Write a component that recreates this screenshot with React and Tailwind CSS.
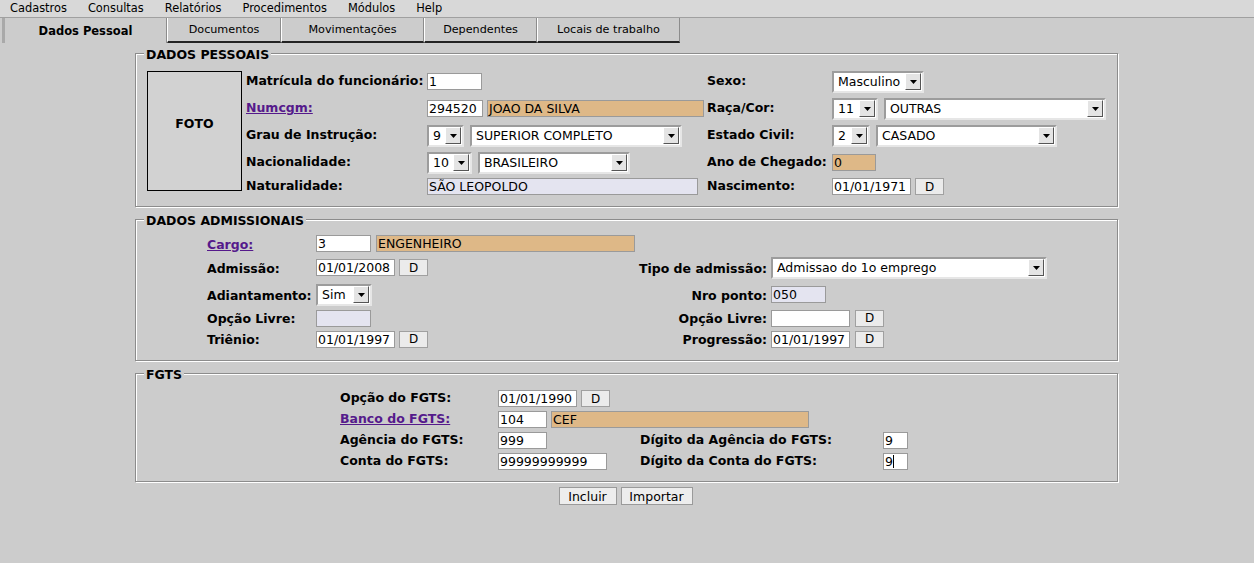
import React from 'react';

const Arrow = () => (
  <div className="w-[16px] h-[17px] shrink-0 bg-[#e4e4e4] border border-t-white border-l-white border-r-[#555] border-b-[#555] flex items-center justify-center">
    <svg width="7" height="4" viewBox="0 0 7 4">
      <polygon points="0,0 7,0 3.5,4" fill="#000" />
    </svg>
  </div>
);

const Select = ({ w, value }) => (
  <div className={`${w} h-[22px] shrink-0 flex items-center bg-white border-2 border-t-[#9c9c9c] border-l-[#9c9c9c] border-r-[#e6e6e6] border-b-[#e6e6e6] pl-[4px] pr-[1px]`}>
    <span className="flex-1 text-[12.5px] leading-[15px] whitespace-nowrap">{value}</span>
    <Arrow />
  </div>
);

const Input = ({ w, value = '', bg = 'bg-white' }) => (
  <div className={`${w} ${bg} h-[17px] shrink-0 border border-[#9a9a9a] px-[1px] flex items-center text-[12.5px] leading-[15px] whitespace-nowrap`}>
    {value}
  </div>
);

const DButton = () => (
  <div className="w-[29px] h-[17px] shrink-0 border border-[#a0a0a0] bg-[#ebebeb] flex items-center justify-center text-[12px] leading-[14px]">
    D
  </div>
);

const Label = ({ children, link }) =>
  link ? (
    <span className="font-bold text-[12.5px] text-[#551a8b] underline whitespace-nowrap">{children}</span>
  ) : (
    <span className="font-bold text-[12.5px] whitespace-nowrap">{children}</span>
  );

const Group = ({ title, h, children }) => (
  <div className={`relative ml-[135px] w-[983px] ${h} border border-[#8c8c8c] shadow-[inset_1px_1px_0_#fff,1px_1px_0_#fff]`}>
    <span className="absolute left-[8px] -top-[7px] bg-[#cccccc] px-[2px] leading-[15px] text-[12.5px] font-bold">
      {title}
    </span>
    {children}
  </div>
);

const menus = ['Cadastros', 'Consultas', 'Relatórios', 'Procedimentos', 'Módulos', 'Help'];

export default function App() {
  return (
    <div className="w-[1254px] h-[563px] bg-[#cccccc] font-['DejaVu_Sans',sans-serif] text-black overflow-hidden">
      {/* menu */}
      <div className="h-[18px] bg-[#d8d8d8] border-b border-[#a0a0a0] flex items-center gap-[21px] pl-[10px] text-[11.4px]">
        {menus.map((m) => (
          <span key={m}>{m}</span>
        ))}
      </div>

      {/* tabs */}
      <div className="flex h-[25px] text-[11.2px]">
        <div className="ml-[2px] w-[165px] border-l-[3px] border-l-[#a9a9a9] border-r border-r-[#8c8c8c] flex items-center justify-center font-bold text-[11.5px] pt-[3px]">
          Dados Pessoal
        </div>
        <div className="w-[114px] border-l border-l-white border-r border-r-[#8c8c8c] border-b-2 border-b-[#222] flex items-center justify-center pt-[2px]">
          Documentos
        </div>
        <div className="w-[143px] border-l border-l-white border-r border-r-[#8c8c8c] border-b-2 border-b-[#222] flex items-center justify-center pt-[2px]">
          Movimentações
        </div>
        <div className="w-[113px] border-l border-l-white border-r border-r-[#8c8c8c] border-b-2 border-b-[#222] flex items-center justify-center pt-[2px]">
          Dependentes
        </div>
        <div className="w-[143px] border-l border-l-white border-r border-r-[#8c8c8c] border-b-2 border-b-[#222] flex items-center justify-center pt-[2px]">
          Locais de trabalho
        </div>
      </div>

      {/* DADOS PESSOAIS */}
      <div className="mt-[10px]">
        <Group title="DADOS PESSOAIS" h="h-[154px]">
          <div className="flex pt-[14px]">
            <div className="ml-[11px] mt-[3px] w-[95px] h-[120px] border border-black bg-[#d2d2d2] flex items-center justify-center font-bold text-[12.5px] pb-[14px]">
              FOTO
            </div>
            <div className="ml-[4px] grid grid-cols-[181px_280px_125px_260px] grid-rows-[27px_27px_27px_27px_21px] items-center">
              <Label>Matrícula do funcionário:</Label>
              <Input w="w-[55px]" value="1" />
              <Label>Sexo:</Label>
              <Select w="w-[92px]" value="Masculino" />

              <Label link>Numcgm:</Label>
              <div className="flex gap-[4px]">
                <Input w="w-[56px]" value="294520" />
                <Input w="w-[217px]" value="JOAO DA SILVA" bg="bg-[#deb887]" />
              </div>
              <Label>Raça/Cor:</Label>
              <div className="flex gap-[6px]">
                <Select w="w-[46px]" value="11" />
                <Select w="w-[222px]" value="OUTRAS" />
              </div>

              <Label>Grau de Instrução:</Label>
              <div className="flex gap-[6px]">
                <Select w="w-[37px]" value="9" />
                <Select w="w-[212px]" value="SUPERIOR COMPLETO" />
              </div>
              <Label>Estado Civil:</Label>
              <div className="flex gap-[6px]">
                <Select w="w-[38px]" value="2" />
                <Select w="w-[181px]" value="CASADO" />
              </div>

              <Label>Nacionalidade:</Label>
              <div className="flex gap-[6px]">
                <Select w="w-[45px]" value="10" />
                <Select w="w-[152px]" value="BRASILEIRO" />
              </div>
              <Label>Ano de Chegado:</Label>
              <Input w="w-[44px]" value="0" bg="bg-[#deb887]" />

              <Label>Naturalidade:</Label>
              <Input w="w-[271px]" value="SÃO LEOPOLDO" bg="bg-[#e4e4f0]" />
              <Label>Nascimento:</Label>
              <div className="flex gap-[4px]">
                <Input w="w-[79px]" value="01/01/1971" />
                <DButton />
              </div>
            </div>
          </div>
        </Group>
      </div>

      {/* DADOS ADMISSIONAIS */}
      <div className="mt-[12px]">
        <Group title="DADOS ADMISSIONAIS" h="h-[142px]">
          <div className="pt-[13px] pl-[71px]">
            <div className="flex items-center h-[21px]">
              <div className="w-[109px]">
                <Label link>Cargo:</Label>
              </div>
              <div className="flex gap-[5px]">
                <Input w="w-[55px]" value="3" />
                <Input w="w-[259px]" value="ENGENHEIRO" bg="bg-[#deb887]" />
              </div>
            </div>

            <div className="flex items-center h-[27px]">
              <div className="w-[109px]">
                <Label>Admissão:</Label>
              </div>
              <div className="w-[300px] flex gap-[4px]">
                <Input w="w-[79px]" value="01/01/2008" />
                <DButton />
              </div>
              <div className="w-[155px] text-right pr-[4px]">
                <Label>Tipo de admissão:</Label>
              </div>
              <Select w="w-[276px]" value="Admissao do 1o emprego" />
            </div>

            <div className="flex items-center h-[27px]">
              <div className="w-[109px]">
                <Label>Adiantamento:</Label>
              </div>
              <div className="w-[300px] flex">
                <Select w="w-[56px]" value="Sim" />
              </div>
              <div className="w-[155px] text-right pr-[4px]">
                <Label>Nro ponto:</Label>
              </div>
              <Input w="w-[55px]" value="050" bg="bg-[#e4e4f0]" />
            </div>

            <div className="flex items-center h-[20px]">
              <div className="w-[109px]">
                <Label>Opção Livre:</Label>
              </div>
              <div className="w-[300px] flex">
                <Input w="w-[55px]" bg="bg-[#e4e4f0]" />
              </div>
              <div className="w-[155px] text-right pr-[4px]">
                <Label>Opção Livre:</Label>
              </div>
              <div className="flex gap-[5px]">
                <Input w="w-[79px]" />
                <DButton />
              </div>
            </div>

            <div className="flex items-center h-[22px]">
              <div className="w-[109px]">
                <Label>Triênio:</Label>
              </div>
              <div className="w-[300px] flex gap-[4px]">
                <Input w="w-[79px]" value="01/01/1997" />
                <DButton />
              </div>
              <div className="w-[155px] text-right pr-[4px]">
                <Label>Progressão:</Label>
              </div>
              <div className="flex gap-[5px]">
                <Input w="w-[79px]" value="01/01/1997" />
                <DButton />
              </div>
            </div>
          </div>
        </Group>
      </div>

      {/* FGTS */}
      <div className="mt-[12px]">
        <Group title="FGTS" h="h-[109px]">
          <div className="pt-[14px] pl-[204px] grid grid-cols-[158px_142px_243px_40px] grid-rows-[21px_21px_21px_21px] items-center">
            <Label>Opção do FGTS:</Label>
            <div className="col-span-3 flex gap-[4px]">
              <Input w="w-[79px]" value="01/01/1990" />
              <DButton />
            </div>

            <Label link>Banco do FGTS:</Label>
            <div className="col-span-3 flex gap-[4px]">
              <Input w="w-[49px]" value="104" />
              <Input w="w-[258px]" value="CEF" bg="bg-[#deb887]" />
            </div>

            <Label>Agência do FGTS:</Label>
            <Input w="w-[49px]" value="999" />
            <Label>Dígito da Agência do FGTS:</Label>
            <Input w="w-[25px]" value="9" />

            <Label>Conta do FGTS:</Label>
            <Input w="w-[109px]" value="99999999999" />
            <Label>Dígito da Conta do FGTS:</Label>
            <div className="w-[25px] h-[17px] bg-white border border-[#9a9a9a] px-[1px] flex items-center text-[12.5px] leading-[15px]">
              9<span className="w-px h-[13px] bg-black" />
            </div>
          </div>
        </Group>
      </div>

      {/* buttons */}
      <div className="mt-[5px] flex justify-center gap-[4px] pr-[3px]">
        <div className="w-[58px] h-[18px] border border-[#9a9a9a] bg-[#ededed] flex items-center justify-center text-[12.5px] leading-[15px]">
          Incluir
        </div>
        <div className="w-[72px] h-[18px] border border-[#9a9a9a] bg-[#ededed] flex items-center justify-center text-[12.5px] leading-[15px]">
          Importar
        </div>
      </div>
    </div>
  );
}
